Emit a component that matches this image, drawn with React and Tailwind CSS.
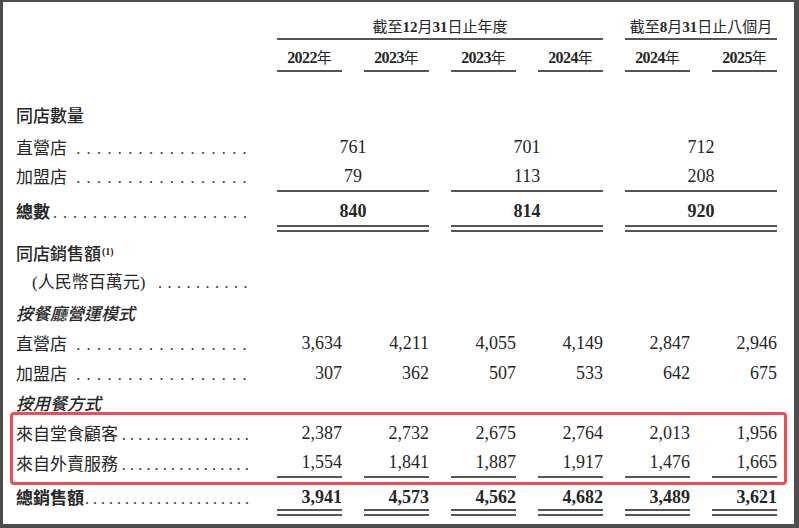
const COLS = "grid grid-cols-[239px_repeat(6,65px)] gap-x-[22px]";
const CJK = "font-['Noto_Sans_CJK_TC','Noto_Sans_CJK_SC',sans-serif]";
const NUM = "font-['Liberation_Serif','Noto_Sans_CJK_TC',serif]";

const years = ["2022", "2023", "2023", "2024", "2024", "2025"];

const storeRows = [
  { label: "直營店", values: ["761", "701", "712"] },
  { label: "加盟店", values: ["79", "113", "208"] },
];

const byModel = [
  { label: "直營店", values: ["3,634", "4,211", "4,055", "4,149", "2,847", "2,946"] },
  { label: "加盟店", values: ["307", "362", "507", "533", "642", "675"] },
];

const byDining = [
  { label: "來自堂食顧客", values: ["2,387", "2,732", "2,675", "2,764", "2,013", "1,956"] },
  { label: "來自外賣服務", values: ["1,554", "1,841", "1,887", "1,917", "1,476", "1,665"] },
];

const totalSales = ["3,941", "4,573", "4,562", "4,682", "3,489", "3,621"];

// label with a dot leader running to the column edge
function Label({ children, dots, tracking, className = "" }) {
  return (
    <div className={`flex min-w-0 items-baseline pr-[2px] ${className}`}>
      <span className={`whitespace-nowrap text-[17px] ${CJK}`}>{children}</span>
      <span className={`ml-auto whitespace-nowrap text-[16px] font-normal text-[#333] ${NUM} ${tracking}`}>
        {".".repeat(dots)}
      </span>
    </div>
  );
}

function Heading({ children, className = "" }) {
  return (
    <div className={`${COLS} h-[30px] items-center`}>
      <div className={`text-[17px] font-medium ${CJK} ${className}`}>{children}</div>
    </div>
  );
}

export default function App() {
  return (
    <div className="box-border h-[528px] w-[799px] overflow-hidden border-t-2 border-r-[5px] border-b-4 border-l-[3px] border-[#4d4d4d] bg-white pl-[13px] text-[#262626]">
      {/* period headings */}
      <div className={COLS}>
        <div />
        <div className={`col-span-4 h-[38px] border-b-2 border-[#555] pt-[15px] text-center text-[15px] leading-[20px] ${NUM}`}>
          截至<b>12</b>月<b>31</b>日止年度
        </div>
        <div className={`col-span-2 h-[38px] border-b-2 border-[#555] pt-[15px] text-center text-[15px] leading-[20px] ${NUM}`}>
          截至<b>8</b>月<b>31</b>日止八個月
        </div>
      </div>

      <div className={COLS}>
        <div />
        {years.map((y, i) => (
          <div
            key={i}
            className={`h-[32px] border-b-2 border-[#555] pt-[7px] text-center text-[16px] leading-[20px] ${NUM}`}
          >
            <span className="font-bold tracking-[-0.6px]">{y}</span>
            <span className={`text-[15px] ${CJK}`}>年</span>
          </div>
        ))}
      </div>

      {/* same-store count */}
      <div className="mt-[28px]">
        <Heading>同店數量</Heading>
      </div>

      <div className={`${COLS} mt-[2px] h-[30px]`}>
        <Label className="leading-[30px]" dots={17} tracking="tracking-[6.4px]">
          {storeRows[0].label}
        </Label>
        {storeRows[0].values.map((v, i) => (
          <div key={i} className={`col-span-2 text-center text-[18px] leading-[30px] ${NUM}`}>
            {v}
          </div>
        ))}
      </div>

      <div className={`${COLS} h-[30px]`}>
        <Label className="leading-[28px]" dots={17} tracking="tracking-[6.4px]">
          {storeRows[1].label}
        </Label>
        {storeRows[1].values.map((v, i) => (
          <div
            key={i}
            className={`col-span-2 h-[30px] border-b-2 border-[#555] text-center text-[18px] leading-[28px] ${NUM}`}
          >
            {v}
          </div>
        ))}
      </div>

      <div className={`${COLS} h-[40px]`}>
        <Label className="pt-[6px] leading-[26px] font-bold" dots={20} tracking="tracking-[6px]">
          總數
        </Label>
        {["840", "814", "920"].map((v, i) => (
          <div
            key={i}
            className={`col-span-2 h-[40px] border-b-[7px] border-double border-[#555] pt-[6px] text-center text-[18px] font-bold leading-[26px] ${NUM}`}
          >
            {v}
          </div>
        ))}
      </div>

      {/* same-store sales */}
      <div className="mt-[6px]">
        <Heading>
          同店銷售額
          <sup className={`ml-[1px] text-[10px] font-bold ${NUM}`}>(1)</sup>
        </Heading>
      </div>

      <div className={`${COLS} h-[30px]`}>
        <Label className="pl-[16px] leading-[26px]" dots={10} tracking="tracking-[5.5px]">
          <span className={NUM}>(</span>人民幣百萬元<span className={NUM}>)</span>
        </Label>
      </div>

      <Heading className="italic">按餐廳營運模式</Heading>

      {byModel.map((row) => (
        <div key={row.label} className={`${COLS} h-[30px]`}>
          <Label className="leading-[30px]" dots={17} tracking="tracking-[6.4px]">
            {row.label}
          </Label>
          {row.values.map((v, i) => (
            <div key={i} className={`text-right text-[18px] leading-[30px] ${NUM}`}>
              {v}
            </div>
          ))}
        </div>
      ))}

      <Heading className="italic">按用餐方式</Heading>

      <div className="relative">
        {byDining.map((row, r) => (
          <div key={row.label} className={`${COLS} h-[30px]`}>
            <Label className="leading-[30px]" dots={16} tracking="tracking-[4.2px]">
              {row.label}
            </Label>
            {row.values.map((v, i) => (
              <div
                key={i}
                className={`h-[30px] text-right text-[18px] ${NUM} ${
                  r === 1 ? "border-b-2 border-[#555] leading-[28px]" : "leading-[30px]"
                }`}
              >
                {v}
              </div>
            ))}
          </div>
        ))}
        {/* highlight box */}
        <div className="pointer-events-none absolute -top-[6px] right-[7px] -bottom-[7px] -left-[6px] rounded-[4px] border-[3px] border-[#ef4d52]" />
      </div>

      <div className={`${COLS} h-[38px]`}>
        <Label className="pt-[8px] leading-[22px] font-bold" dots={21} tracking="tracking-[4px]">
          總銷售額
        </Label>
        {totalSales.map((v, i) => (
          <div
            key={i}
            className={`h-[38px] border-b-[7px] border-double border-[#555] pt-[8px] text-right text-[18px] font-bold leading-[22px] ${NUM}`}
          >
            {v}
          </div>
        ))}
      </div>
    </div>
  );
}
